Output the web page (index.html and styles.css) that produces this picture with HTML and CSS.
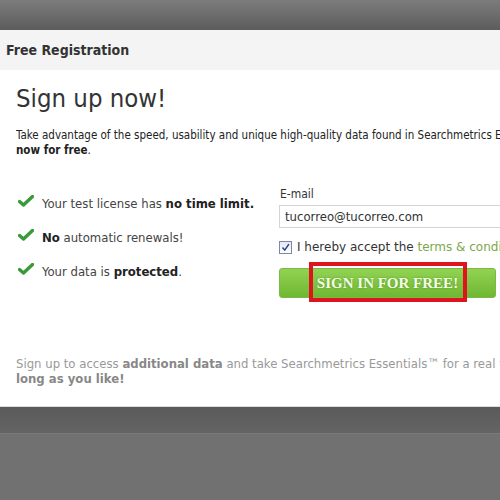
FILE: index.html
```html
<!DOCTYPE html>
<html lang="en">
<head>
    <meta charset="UTF-8">
    <title>Free Registration</title>
    <link rel="stylesheet" href="styles.css">
</head>
<body>
    <div class="backdrop-top"></div>

    <div class="dialog">
        <div class="dialog-header">Free Registration</div>

        <div class="dialog-body">
            <h1 class="title">Sign up now!</h1>
            <p class="intro">
                <span class="clip">Take advantage of the speed, usability and unique high-quality data found in Searchmetrics Essentials. Sign up</span>
                <strong>now for free</strong>.
            </p>

            <div class="columns">
                <ul class="features">
                    <li>
                        <svg class="check" viewBox="0 0 16 12" width="16" height="12"><path d="M1.5 6.5 L5.5 10 L14.5 1.5" /></svg>
                        <span>Your test license has <b>no time limit.</b></span>
                    </li>
                    <li>
                        <svg class="check" viewBox="0 0 16 12" width="16" height="12"><path d="M1.5 6.5 L5.5 10 L14.5 1.5" /></svg>
                        <span><b>No</b> automatic renewals!</span>
                    </li>
                    <li>
                        <svg class="check" viewBox="0 0 16 12" width="16" height="12"><path d="M1.5 6.5 L5.5 10 L14.5 1.5" /></svg>
                        <span>Your data is <b>protected</b>.</span>
                    </li>
                </ul>

                <form class="signup">
                    <label class="field-label" for="email">E-mail</label>
                    <div class="field">tucorreo@tucorreo.com</div>
                    <div class="accept">
                        <span class="checkbox">
                            <svg viewBox="0 0 12 12" width="9" height="9"><path d="M2 6 L5 9.5 L10.5 1.5" /></svg>
                        </span>
                        <span class="accept-text">I hereby accept the <span class="link">terms &amp; conditions</span></span>
                    </div>
                    <div class="submit-wrap">
                        <button type="button" class="btn-submit">SIGN IN FOR FREE!</button>
                        <span class="highlight"></span>
                    </div>
                </form>
            </div>

            <p class="outro">
                <span class="clip">Sign up to access <b>additional data</b> and take Searchmetrics Essentials™ for a real test drive for as</span>
                <b>long as you like!</b>
            </p>
        </div>
    </div>

    <div class="backdrop-bottom"></div>
</body>
</html>
```

FILE: styles.css
```css
/* Base */
* {
    margin: 0;
    padding: 0;
    box-sizing: border-box;
}

body {
    width: 500px;
    height: 500px;
    overflow: hidden;
    background: #717171;
    font-family: 'DejaVu Sans Condensed', 'DejaVu Sans', sans-serif;
    color: #333;
}

/* Backdrop */
.backdrop-top {
    height: 30px;
    background: linear-gradient(#7c7c7c, #5c5c5c);
}

.backdrop-bottom {
    height: 27px;
    background: linear-gradient(#5a5a5a, #646464);
    border-bottom: 1px solid #7a7a7a;
}

/* Dialog */
.dialog {
    background: #fff;
    border-bottom: 1px solid #ddd;
}

.dialog-header {
    height: 40px;
    padding: 12px 0 0 6px;
    background: #f4f4f4;
    font-weight: bold;
    font-size: 14px;
    color: #333;
}

.dialog-body {
    height: 336px;
    padding: 11px 0 0 16px;
}

.title {
    font-weight: normal;
    font-size: 25.5px;
    line-height: 34px;
    color: #333;
}

.intro {
    margin-top: 13px;
    font-size: 11.5px;
    line-height: 15px;
    color: #222;
}

.clip {
    display: block;
    white-space: nowrap;
    overflow: hidden;
}

/* Columns */
.columns {
    display: grid;
    grid-template-columns: 263px 1fr;
    margin-top: 28px;
}

.features {
    list-style: none;
}

.features li {
    display: flex;
    align-items: center;
    gap: 8px;
    height: 34px;
    font-size: 13px;
    color: #444;
}

.features b {
    color: #222;
}

.check {
    margin-left: 2px;
    margin-top: -5px;
    fill: none;
    stroke: #3a9a3a;
    stroke-width: 3.4;
    stroke-linecap: round;
    stroke-linejoin: round;
}

/* Sign up form */
.signup {
    display: flex;
    flex-direction: column;
}

.field-label {
    font-size: 12px;
    line-height: 16px;
    margin-left: 1px;
    color: #333;
}

.field {
    margin-top: 3px;
    height: 23px;
    padding: 3px 5px;
    border: 1px solid #d4d4d4;
    border-right: none;
    font-size: 13px;
    color: #333;
}

.accept {
    display: flex;
    align-items: center;
    gap: 5px;
    margin-top: 12px;
    white-space: nowrap;
    font-family: 'DejaVu Sans', sans-serif;
    font-size: 12px;
    color: #333;
}

.checkbox {
    display: flex;
    align-items: center;
    justify-content: center;
    width: 13px;
    height: 13px;
    border: 1px solid #7a8aa6;
    background: linear-gradient(#e4e8f2, #fff);
}

.checkbox path {
    fill: none;
    stroke: #2b3f8c;
    stroke-width: 2;
}

.link {
    color: #7aa84a;
}

.submit-wrap {
    position: relative;
    margin-top: 14px;
    width: 217px;
}

.btn-submit {
    display: block;
    width: 100%;
    height: 30px;
    border: 1px solid #79b944;
    border-radius: 3px;
    background: linear-gradient(#92d252, #6fb833);
    font-family: 'Liberation Serif', serif;
    font-weight: bold;
    font-size: 15px;
    color: #f4ffe8;
    text-shadow: 0 0 2px rgba(60, 110, 20, 0.6);
}

.highlight {
    position: absolute;
    left: 30px;
    top: -6px;
    width: 158px;
    height: 40px;
    border: 4px solid #e0141e;
}

/* Footer note */
.outro {
    margin-top: 58px;
    font-size: 13px;
    line-height: 15px;
    color: #999;
}

.outro b {
    color: #888;
}
```
